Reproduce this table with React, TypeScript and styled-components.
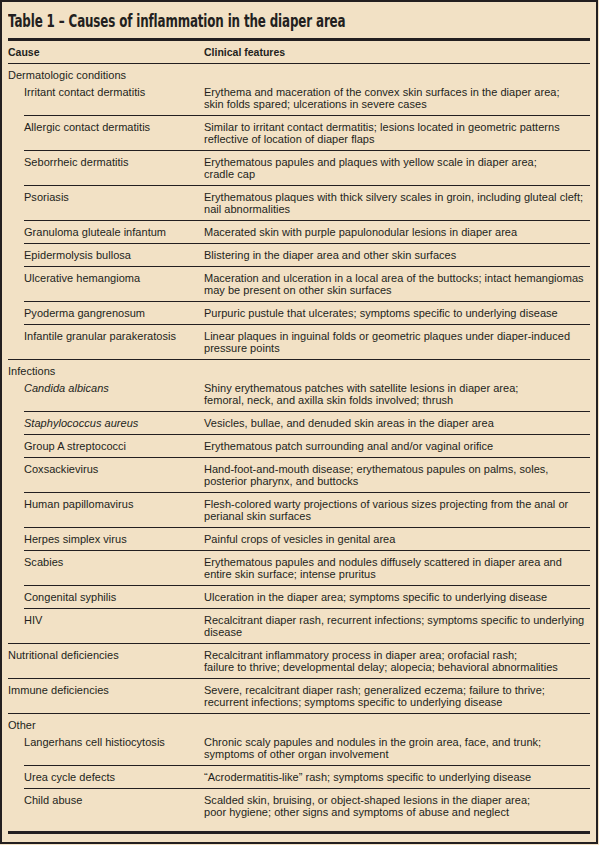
import React from 'react';
import styled, { createGlobalStyle } from 'styled-components';

type Cause = {
  name: string;
  italic?: boolean;
  features: string[];
};

type Section = {
  label?: string;
  rows: Cause[];
};

const sections: Section[] = [
  {
    label: 'Dermatologic conditions',
    rows: [
      {
        name: 'Irritant contact dermatitis',
        features: [
          'Erythema and maceration of the convex skin surfaces in the diaper area;',
          'skin folds spared; ulcerations in severe cases',
        ],
      },
      {
        name: 'Allergic contact dermatitis',
        features: [
          'Similar to irritant contact dermatitis; lesions located in geometric patterns',
          'reflective of location of diaper flaps',
        ],
      },
      {
        name: 'Seborrheic dermatitis',
        features: ['Erythematous papules and plaques with yellow scale in diaper area;', 'cradle cap'],
      },
      {
        name: 'Psoriasis',
        features: [
          'Erythematous plaques with thick silvery scales in groin, including gluteal cleft;',
          'nail abnormalities',
        ],
      },
      {
        name: 'Granuloma gluteale infantum',
        features: ['Macerated skin with purple papulonodular lesions in diaper area'],
      },
      {
        name: 'Epidermolysis bullosa',
        features: ['Blistering in the diaper area and other skin surfaces'],
      },
      {
        name: 'Ulcerative hemangioma',
        features: [
          'Maceration and ulceration in a local area of the buttocks; intact hemangiomas',
          'may be present on other skin surfaces',
        ],
      },
      {
        name: 'Pyoderma gangrenosum',
        features: ['Purpuric pustule that ulcerates; symptoms specific to underlying disease'],
      },
      {
        name: 'Infantile granular parakeratosis',
        features: [
          'Linear plaques in inguinal folds or geometric plaques under diaper-induced',
          'pressure points',
        ],
      },
    ],
  },
  {
    label: 'Infections',
    rows: [
      {
        name: 'Candida albicans',
        italic: true,
        features: [
          'Shiny erythematous patches with satellite lesions in diaper area;',
          'femoral, neck, and axilla skin folds involved; thrush',
        ],
      },
      {
        name: 'Staphylococcus aureus',
        italic: true,
        features: ['Vesicles, bullae, and denuded skin areas in the diaper area'],
      },
      {
        name: 'Group A streptococci',
        features: ['Erythematous patch surrounding anal and/or vaginal orifice'],
      },
      {
        name: 'Coxsackievirus',
        features: [
          'Hand-foot-and-mouth disease; erythematous papules on palms, soles,',
          'posterior pharynx, and buttocks',
        ],
      },
      {
        name: 'Human papillomavirus',
        features: [
          'Flesh-colored warty projections of various sizes projecting from the anal or',
          'perianal skin surfaces',
        ],
      },
      {
        name: 'Herpes simplex virus',
        features: ['Painful crops of vesicles in genital area'],
      },
      {
        name: 'Scabies',
        features: [
          'Erythematous papules and nodules diffusely scattered in diaper area and',
          'entire skin surface; intense pruritus',
        ],
      },
      {
        name: 'Congenital syphilis',
        features: ['Ulceration in the diaper area; symptoms specific to underlying disease'],
      },
      {
        name: 'HIV',
        features: [
          'Recalcitrant diaper rash, recurrent infections; symptoms specific to underlying',
          'disease',
        ],
      },
    ],
  },
  {
    rows: [
      {
        name: 'Nutritional deficiencies',
        features: [
          'Recalcitrant inflammatory process in diaper area; orofacial rash;',
          'failure to thrive; developmental delay; alopecia; behavioral abnormalities',
        ],
      },
    ],
  },
  {
    rows: [
      {
        name: 'Immune deficiencies',
        features: [
          'Severe, recalcitrant diaper rash; generalized eczema; failure to thrive;',
          'recurrent infections; symptoms specific to underlying disease',
        ],
      },
    ],
  },
  {
    label: 'Other',
    rows: [
      {
        name: 'Langerhans cell histiocytosis',
        features: [
          'Chronic scaly papules and nodules in the groin area, face, and trunk;',
          'symptoms of other organ involvement',
        ],
      },
      {
        name: 'Urea cycle defects',
        features: ['\u201cAcrodermatitis-like\u201d rash; symptoms specific to underlying disease'],
      },
      {
        name: 'Child abuse',
        features: [
          'Scalded skin, bruising, or object-shaped lesions in the diaper area;',
          'poor hygiene; other signs and symptoms of abuse and neglect',
        ],
      },
    ],
  },
];

const App = () => {
  return (
    <>
      <GlobalStyle />
      <Page>
        <TitleBar>
          <Title>Table 1 – Causes of inflammation in the diaper area</Title>
        </TitleBar>
        <ThickRule />
        <HeaderRow>
          <HeadCell>Cause</HeadCell>
          <HeadCell>Clinical features</HeadCell>
        </HeaderRow>
        {sections.map((section, i) => {
          const lastSection = i === sections.length - 1;
          if (!section.label) {
            const row = section.rows[0];
            return (
              <Row key={row.name} $divided={!lastSection}>
                <CauseCell $italic={row.italic}>{row.name}</CauseCell>
                <Features lines={row.features} />
              </Row>
            );
          }
          return (
            <Group key={section.label} $divided={!lastSection}>
              <GroupLabel>{section.label}</GroupLabel>
              {section.rows.map((row, j) => (
                <SubRow key={row.name} $divided={j < section.rows.length - 1}>
                  <CauseCell $italic={row.italic}>{row.name}</CauseCell>
                  <Features lines={row.features} />
                </SubRow>
              ))}
            </Group>
          );
        })}
        <BottomRule />
      </Page>
    </>
  );
};

const Features = ({ lines }: { lines: string[] }) => (
  <FeatureCell>
    {lines.map((line) => (
      <Line key={line}>{line}</Line>
    ))}
  </FeatureCell>
);

export default App;

const GlobalStyle = createGlobalStyle`
  html, body {
    margin: 0;
    padding: 0;
    background: #f2e1c5;
  }
`;

const Page = styled.div`
  box-sizing: border-box;
  width: 598px;
  height: 844px;
  border: 2px solid #231f20;
  background: #f2e1c5;
  color: #231f20;
  padding: 0 6px;
  display: flex;
  flex-direction: column;
  font-family: 'Liberation Sans', Arial, sans-serif;
  font-size: 11px;
  letter-spacing: 0.03px;
  line-height: 12px;
`;

const TitleBar = styled.div`
  padding: 9px 0 7px;
`;

// no condensed face is installed, so the bold face is narrowed
const Title = styled.div`
  font-family: 'DejaVu Sans', 'Liberation Sans', sans-serif;
  font-weight: 700;
  font-size: 17px;
  line-height: 20px;
  letter-spacing: -0.2px;
  white-space: nowrap;
  transform: scaleX(0.7);
  transform-origin: left center;
`;

const ThickRule = styled.div`
  height: 3px;
  background: #231f20;
`;

const BottomRule = styled(ThickRule)`
  margin-top: 8px;
`;

const HeaderRow = styled.div`
  display: grid;
  grid-template-columns: 196px 1fr;
  padding: 5px 0;
  border-bottom: 1px solid #231f20;
`;

const HeadCell = styled.div`
  font-weight: 700;
  font-size: 10.5px;
  letter-spacing: 0;
`;

const Group = styled.div<{ $divided: boolean }>`
  border-bottom: ${({ $divided }) => ($divided ? '1px solid #231f20' : 'none')};
`;

const GroupLabel = styled.div`
  padding-top: 5px;
`;

const Row = styled.div<{ $divided: boolean }>`
  display: grid;
  grid-template-columns: 196px 1fr;
  padding: 5px 0;
  border-bottom: ${({ $divided }) => ($divided ? '1px solid #231f20' : 'none')};
`;

const SubRow = styled(Row)`
  grid-template-columns: 180px 1fr;
  margin-left: 16px;
`;

const CauseCell = styled.div<{ $italic?: boolean }>`
  font-style: ${({ $italic }) => ($italic ? 'italic' : 'normal')};
  white-space: nowrap;
`;

const FeatureCell = styled.div`
  display: flex;
  flex-direction: column;
`;

const Line = styled.span`
  white-space: nowrap;
`;
